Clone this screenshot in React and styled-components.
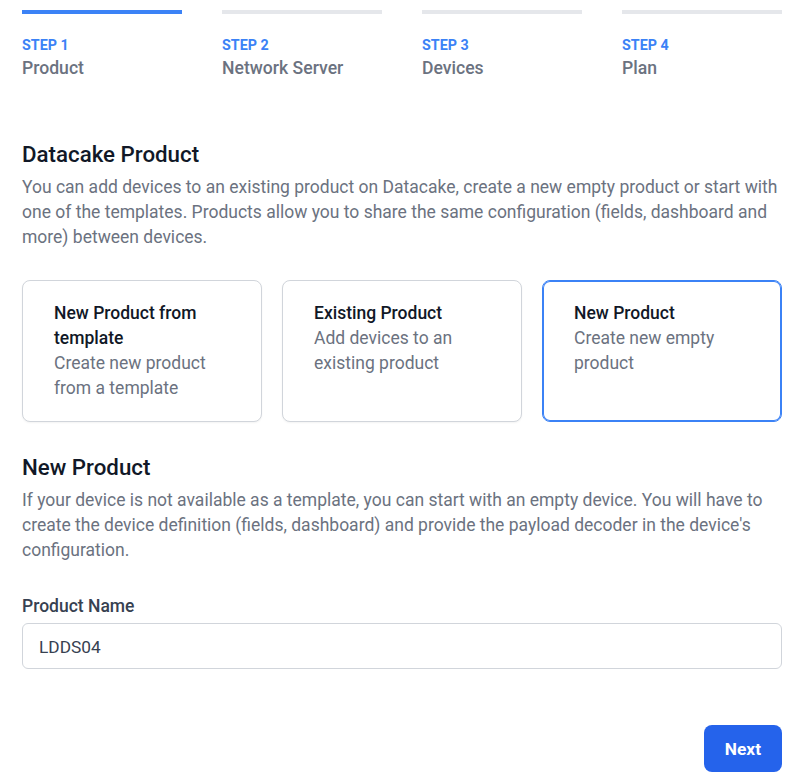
import React from "react";
import styled, { createGlobalStyle } from "styled-components";

const GlobalStyle = createGlobalStyle`
  html, body { margin: 0; padding: 0; background: #ffffff; }
  body { font-family: Roboto, "Noto Sans", "Liberation Sans", sans-serif; color: #111827; }
  * { box-sizing: border-box; }
`;

const Page = styled.div`
  width: 760px;
  margin-left: 22px;
  padding-top: 10px;
`;

const Steps = styled.ol`
  list-style: none;
  margin: 0;
  padding: 0;
  display: grid;
  grid-template-columns: repeat(4, 160px);
  column-gap: 40px;
`;

const Step = styled.li`
  display: flex;
  flex-direction: column;
  border-top: 4px solid ${(p) => (p.$active ? "#3b82f6" : "#e5e7eb")};
  padding-top: 21px;
`;

const StepNum = styled.span`
  font-size: 14.3px;
  line-height: 20px;
  font-weight: 700;
  color: #3b82f6;
  text-transform: uppercase;
`;

const StepName = styled.span`
  font-size: 17.6px;
  line-height: 26px;
  font-weight: 500;
  color: #6b7280;
`;

const Heading = styled.h2`
  margin: ${(p) => p.$mt}px 0 0;
  font-size: 22.3px;
  line-height: 30px;
  font-weight: 500;
  color: #111827;
`;

const Text = styled.p`
  margin: 6px 0 0;
  font-size: 17.5px;
  line-height: 25px;
  color: #6b7280;
`;

const Cards = styled.div`
  margin-top: 30px;
  display: grid;
  grid-template-columns: repeat(3, 1fr);
  gap: 20px;
`;

const Card = styled.div`
  border: 1px solid ${(p) => (p.$selected ? "#3b82f6" : "#d1d5db")};
  box-shadow: ${(p) =>
    p.$selected ? "inset 0 0 0 1px #3b82f6" : "0 1px 2px rgba(0,0,0,0.05)"};
  border-radius: 8px;
  padding: 20px 31px;
  font-size: 17.5px;
  line-height: 25px;
  background: #fff;
`;

const CardTitle = styled.div`
  font-weight: 500;
  color: #111827;
`;

const CardDesc = styled.div`
  color: #6b7280;
`;

const Label = styled.label`
  display: block;
  margin-top: 31px;
  font-size: 17.5px;
  line-height: 25px;
  font-weight: 500;
  color: #374151;
`;

const Input = styled.input`
  display: block;
  width: 100%;
  height: 46px;
  margin-top: 4px;
  padding: 2px 16px 0;
  border: 1px solid #d1d5db;
  border-radius: 6px;
  font-family: inherit;
  font-size: 17.3px;
  color: #374151;
  background: #fff;
  outline: none;
`;

const Footer = styled.div`
  display: flex;
  justify-content: flex-end;
  margin-top: 56px;
`;

const Button = styled.button`
  height: 47px;
  padding: 0 21px;
  border: none;
  border-radius: 8px;
  background: #2563eb;
  color: #fff;
  font-family: inherit;
  font-size: 17.3px;
  font-weight: 700;
  cursor: pointer;
`;

const steps = [
  { num: "Step 1", name: "Product", active: true },
  { num: "Step 2", name: "Network Server" },
  { num: "Step 3", name: "Devices" },
  { num: "Step 4", name: "Plan" },
];

const cards = [
  { title: "New Product from template", desc: "Create new product from a template" },
  { title: "Existing Product", desc: "Add devices to an existing product" },
  { title: "New Product", desc: "Create new empty product", selected: true },
];

export default function App() {
  return (
    <>
      <GlobalStyle />
      <Page>
        <Steps>
          {steps.map((s) => (
            <Step key={s.num} $active={s.active}>
              <StepNum>{s.num}</StepNum>
              <StepName>{s.name}</StepName>
            </Step>
          ))}
        </Steps>

        <Heading $mt={58}>Datacake Product</Heading>
        <Text>
          You can add devices to an existing product on Datacake, create a new empty product or start with
          one of the templates. Products allow you to share the same configuration (fields, dashboard and
          more) between devices.
        </Text>

        <Cards>
          {cards.map((c) => (
            <Card key={c.title} $selected={c.selected}>
              <CardTitle>{c.title}</CardTitle>
              <CardDesc>{c.desc}</CardDesc>
            </Card>
          ))}
        </Cards>

        <Heading $mt={30}>New Product</Heading>
        <Text>
          If your device is not available as a template, you can start with an empty device. You will have to
          create the device definition (fields, dashboard) and provide the payload decoder in the device's
          configuration.
        </Text>

        <Label htmlFor="product-name">Product Name</Label>
        <Input id="product-name" defaultValue="LDDS04" />

        <Footer>
          <Button>Next</Button>
        </Footer>
      </Page>
    </>
  );
}
